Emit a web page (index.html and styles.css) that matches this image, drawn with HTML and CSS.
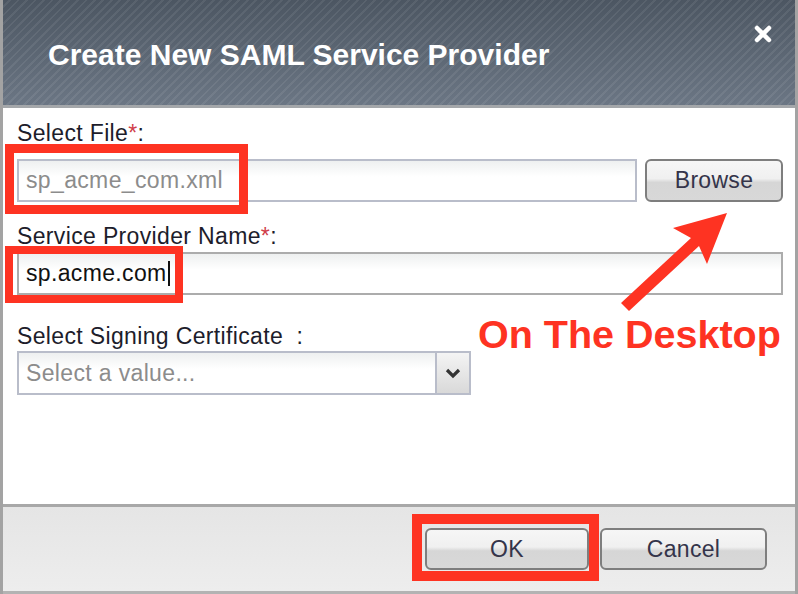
FILE: index.html
```html
<!DOCTYPE html>
<html>
<head>
<meta charset="utf-8">
<link rel="stylesheet" href="styles.css">
</head>
<body>
<div class="dialog">
  <div class="header">
    <h1 class="title">Create New SAML Service Provider</h1>
    <svg class="close" width="20" height="20" viewBox="0 0 20 20"><path d="M4 4 L16 16 M16 4 L4 16" stroke="#fff" stroke-width="4.5" stroke-linecap="round"/></svg>
  </div>
  <div class="content">
    <div class="label l1">Select File<span class="req">*</span>:</div>
    <div class="file-row">
      <div class="input file-input"><span class="ph">sp_acme_com.xml</span></div>
      <div class="btn browse">Browse</div>
    </div>
    <div class="label l2">Service Provider Name<span class="req">*</span>:</div>
    <div class="input name-input"><span class="val">sp.acme.com</span><span class="caret"></span></div>
    <div class="label l3">Select Signing Certificate&nbsp; :</div>
    <div class="select">
      <span class="ph sel-ph">Select a value...</span>
      <span class="sel-btn"><svg width="18" height="12" viewBox="0 0 18 12"><path d="M3 3 L9 9 L15 3" fill="none" stroke="#333" stroke-width="3.2"/></svg></span>
    </div>
  </div>
  <div class="footer">
    <div class="btn okbtn">OK</div>
    <div class="btn cancelbtn">Cancel</div>
  </div>

  <div class="mark m1"></div>
  <div class="mark m2"></div>
  <div class="mark m3"></div>
  <div class="note">On The Desktop</div>
  <svg class="arrow" width="798" height="594" viewBox="0 0 798 594">
    <path d="M621 303 L629 311 L699 246 L707 264 L727 213 L673 228 L691 238 Z" fill="#fe3322"/>
  </svg>
</div>
</body>
</html>
```

FILE: styles.css
```css
* { box-sizing: border-box; }
html, body { margin: 0; padding: 0; background: #fff; }
body { font-family: "Liberation Sans", Arial, sans-serif; }

.dialog {
  position: relative;
  width: 798px;
  height: 594px;
  border-left: 3px solid #a3a3a3;
  border-right: 3px solid #a3a3a3;
  display: flex;
  flex-direction: column;
  overflow: hidden;
}

.header {
  height: 108px;
  flex: none;
  border-bottom: 3px solid #a4a7aa;
  background:
    repeating-linear-gradient(135deg, rgba(255,255,255,0) 0px, rgba(255,255,255,0) 4px, rgba(255,255,255,0.07) 4px, rgba(255,255,255,0.07) 6px),
    linear-gradient(#4c5662, #6b7684);
  display: flex;
  justify-content: space-between;
  align-items: flex-start;
  padding: 0 22px 0 45px;
}
.title {
  margin: 37px 0 0 0;
  font-size: 30px;
  line-height: 36px;
  font-weight: bold;
  color: #fff;
}
.close { margin-top: 24px; }

.content {
  height: 396px;
  flex: none;
  padding: 12px 12px 0 14px;
  background: #fff;
}
.label {
  font-size: 23px;
  line-height: 26px;
  color: #1d1d2b;
  height: 26px;
  letter-spacing: 0.35px;
}
.req { color: #d0404a; }
.l1 { margin-bottom: 13px; }
.l2 { margin-top: 21px; margin-bottom: 3px; }
.l3 { margin-top: 28px; margin-bottom: 2px; }

.file-row { display: flex; gap: 8px; height: 43px; }
.input {
  height: 43px;
  border: 2px solid #b9bdca;
  background: linear-gradient(#eef0f0, #fff 40%);
  display: flex;
  align-items: center;
  padding-left: 7px;
  font-size: 23px;
  letter-spacing: 0.35px;
}
.file-input { flex: 1; }
.name-input { border-color: #acacac; }
.ph { color: #8c8c8c; }
.val { color: #111; }
.caret { display: inline-block; width: 2px; height: 25px; background: #111; margin-left: 1px; }

.btn {
  border: 2px solid #7e7e7e;
  border-radius: 6px;
  background: linear-gradient(#f6f6f6 0%, #f0f0f0 45%, #d6d6d6 55%, #d8d8d8 100%);
  color: #34344a;
  font-size: 23px;
  letter-spacing: 0.3px;
  display: flex;
  align-items: center;
  justify-content: center;
}
.browse { width: 138px; height: 43px; }

.select {
  width: 454px;
  height: 44px;
  border: 2px solid #b9bdca;
  background: linear-gradient(#eef0f0, #fff 40%);
  display: flex;
  align-items: center;
  padding-left: 7px;
  font-size: 23px;
  letter-spacing: 0.35px;
}
.sel-ph { flex: 1; }
.sel-btn {
  width: 34px;
  height: 40px;
  border-left: 2px solid #b9bdca;
  background: linear-gradient(#f4f4f4, #d9d9d9);
  display: flex;
  align-items: center;
  justify-content: center;
}

.footer {
  flex: 1;
  border-top: 3px solid #a8a8a8;
  border-bottom: 3px solid #b3b3b3;
  background: linear-gradient(#e5e5e5, #ededed);
  display: flex;
  justify-content: flex-end;
  align-items: flex-start;
  gap: 11px;
  padding: 21px 28px 0 0;
}
.okbtn { width: 164px; height: 42px; }
.cancelbtn { width: 167px; height: 42px; }

.mark { position: absolute; border: 9px solid #fe3322; }
.m1 { left: 2px; top: 144px; width: 243px; height: 70px; }
.m2 { left: 2px; top: 246px; width: 178px; height: 57px; border-width: 8px; }
.m3 { left: 409px; top: 514px; width: 187px; height: 67px; border-width: 10px; }

.note {
  position: absolute;
  left: 475px;
  top: 312px;
  font-size: 39.5px;
  line-height: 44px;
  font-weight: bold;
  color: #fe3322;
}
.arrow { position: absolute; left: -3px; top: 0; pointer-events: none; }
```
